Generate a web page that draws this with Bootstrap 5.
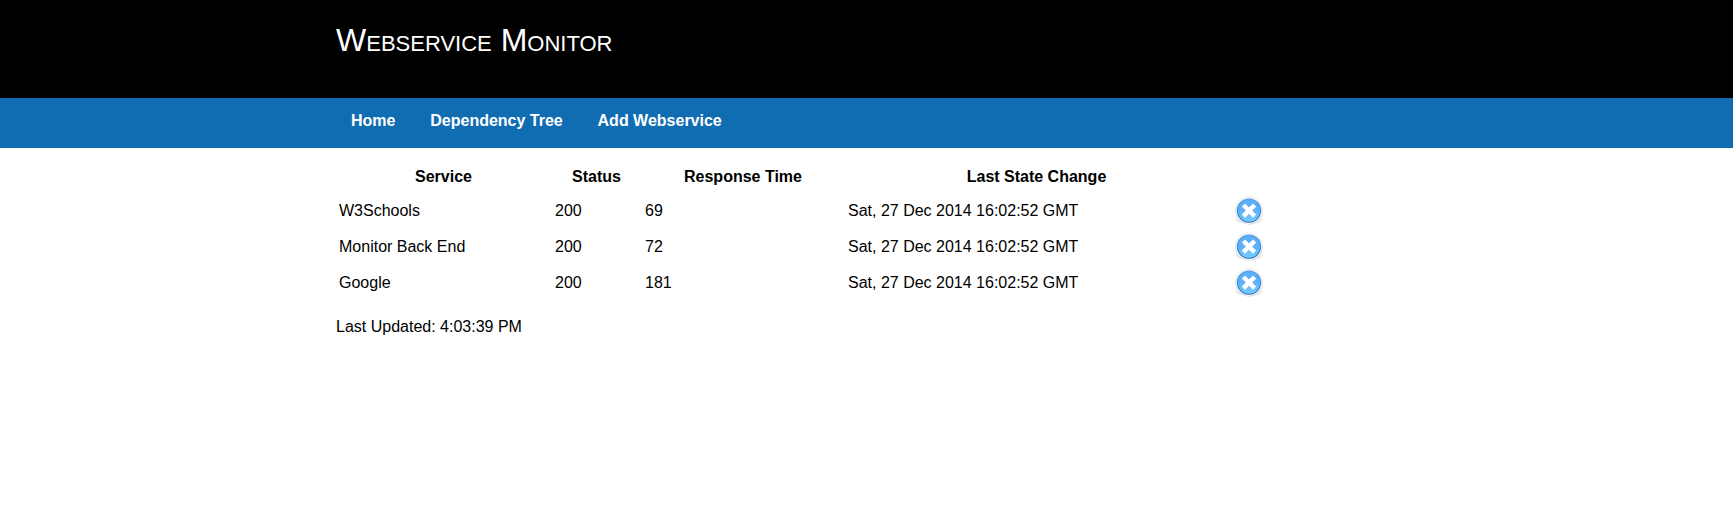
<!DOCTYPE html>
<html lang="en">
<head>
<meta charset="utf-8">
<meta name="viewport" content="width=device-width, initial-scale=1">
<title>Webservice Monitor</title>
<link href="https://cdn.jsdelivr.net/npm/bootstrap@5.3.0/dist/css/bootstrap.min.css" rel="stylesheet">
<style>
body{font-family:"Liberation Sans",Arial,sans-serif;font-size:16px;line-height:20px;color:#000;background:#fff}
.page-width{width:1061px}
.site-header{height:98px;background:#000;color:#fff}
.site-title{font-size:32px;line-height:36px;font-variant:small-caps;padding-top:22px;font-weight:400}
.site-nav{height:50px;background:#106db2}
.site-nav .nav{padding:13px 0 0 15px;gap:34.8px}
.site-nav .nav-link{color:#fff;line-height:20px}
.services{table-layout:fixed;width:1061px;margin-top:14px}
.services th{height:30px;padding:0 4px 0 3px;text-align:center}
.services td{height:36px;padding:0 3px;vertical-align:middle}
.services tbody tr:first-child td{height:37px;padding-top:1px}
.icon-btn{width:32px;height:32px}
.updated{margin-top:16px}
</style>
</head>
<body>
<svg width="0" height="0" class="position-absolute" aria-hidden="true">
<defs>
<linearGradient id="ball" x1="0" y1="0" x2="0" y2="1"><stop offset="0" stop-color="#5aaef5"/><stop offset=".5" stop-color="#5cb1fa"/><stop offset="1" stop-color="#7accff"/></linearGradient>
<linearGradient id="rim" x1="0" y1="0" x2="0" y2="1"><stop offset="0" stop-color="#4b9ce6"/><stop offset="1" stop-color="#1c72bd"/></linearGradient>
<linearGradient id="ring" x1="0" y1="0" x2="0" y2="1"><stop offset="0" stop-color="#ededed"/><stop offset="1" stop-color="#cfcfcf"/></linearGradient>
<radialGradient id="shade"><stop offset=".5" stop-color="#d8d8d8"/><stop offset="1" stop-color="#fff"/></radialGradient>
<symbol id="remove" viewBox="0 0 32 32">
<ellipse cx="17" cy="24.5" rx="15" ry="5" fill="url(#shade)"/>
<circle cx="17" cy="15.6" r="14" fill="url(#ring)"/>
<circle cx="17" cy="15.6" r="13.3" fill="#f5f5f5"/>
<circle cx="17" cy="15.6" r="11.6" fill="url(#ball)" stroke="url(#rim)" stroke-width="1.1"/>
<path d="M13 11.6l8 8m0-8l-8 8" stroke="#fff" stroke-width="4.5" stroke-linecap="square" stroke-linejoin="round"/>
</symbol>
</defs>
</svg>
<header class="site-header"><div class="page-width mx-auto"><h1 class="site-title m-0">Webservice Monitor</h1></div></header>
<nav class="site-nav"><div class="page-width mx-auto">
<ul class="nav fw-bold">
<li><a class="nav-link p-0" href="#">Home</a></li>
<li><a class="nav-link p-0" href="#">Dependency Tree</a></li>
<li><a class="nav-link p-0" href="#">Add Webservice</a></li>
</ul></div></nav>
<main class="page-width mx-auto">
<table class="services">
<colgroup><col style="width:216px"><col style="width:90px"><col style="width:203px"><col style="width:384px"><col></colgroup>
<thead><tr><th>Service</th><th>Status</th><th>Response Time</th><th>Last State Change</th><th></th></tr></thead>
<tbody>
<tr><td>W3Schools</td><td>200</td><td>69</td><td>Sat, 27 Dec 2014 16:02:52 GMT</td><td><a href="#" aria-label="Remove"><svg class="icon-btn d-block"><use href="#remove"/></svg></a></td></tr>
<tr><td>Monitor Back End</td><td>200</td><td>72</td><td>Sat, 27 Dec 2014 16:02:52 GMT</td><td><a href="#" aria-label="Remove"><svg class="icon-btn d-block"><use href="#remove"/></svg></a></td></tr>
<tr><td>Google</td><td>200</td><td>181</td><td>Sat, 27 Dec 2014 16:02:52 GMT</td><td><a href="#" aria-label="Remove"><svg class="icon-btn d-block"><use href="#remove"/></svg></a></td></tr>
</tbody>
</table>
<p class="mb-0 updated">Last Updated: 4:03:39 PM</p>
</main>
<script src="https://cdn.jsdelivr.net/npm/bootstrap@5.3.0/dist/js/bootstrap.bundle.min.js"></script>
</body>
</html>
